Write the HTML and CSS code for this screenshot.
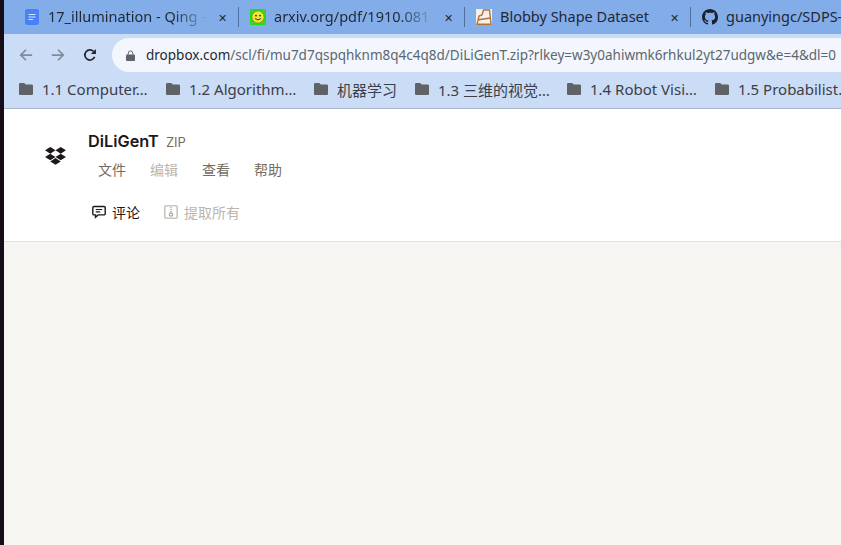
FILE: index.html
```html
<!DOCTYPE html>
<html lang="en">
<head>
    <meta charset="UTF-8">
    <meta name="viewport" content="width=device-width, initial-scale=1.0">
    <title>DiLiGenT.zip - Dropbox</title>
    <link rel="stylesheet" href="styles.css">
</head>
<body>
    <div class="desktop-edge"></div>
    <div class="window">
        <div class="tab-bar">
            <div class="tab">
                <svg class="tab-icon" viewBox="0 0 14 16"><rect width="14" height="16" rx="2.5" fill="#4a80f5"/><path d="M3.5 5.5h7M3.5 8h7M3.5 10.5h4.5" stroke="#d5e2fb" stroke-width="1.2"/></svg>
                <span class="tab-title">17_illumination - Qing -</span>
                <span class="tab-close">✕</span>
            </div>
            <div class="tab">
                <svg class="tab-icon" viewBox="0 0 16 16"><rect width="16" height="16" fill="#1fe010"/><circle cx="8" cy="8" r="6" fill="#f3e23a" stroke="#8a8a20" stroke-width=".6"/><circle cx="6" cy="6.6" r=".9" fill="#222"/><circle cx="10" cy="6.6" r=".9" fill="#222"/><path d="M5 9.500q3 2.800 6 0" stroke="#222" fill="none" stroke-width=".9"/><path d="M.5.5l2.500 2.500M15.500.5L13 3M.5 15.500L3 13M15.500 15.500L13 13" stroke="#998" stroke-width="1.300"/></svg>
                <span class="tab-title">arxiv.org/pdf/1910.081</span>
                <span class="tab-close">✕</span>
            </div>
            <div class="tab">
                <svg class="tab-icon" viewBox="0 0 16 16"><rect width="16" height="16" fill="#f6f1e8"/><path d="M1 15.300L3 7l3-1 1.500-5h6L15 15.300zM2.500 10.800L14.500 9" fill="none" stroke="#b5703a" stroke-width="1.400"/></svg>
                <span class="tab-title">Blobby Shape Dataset</span>
                <span class="tab-close">✕</span>
            </div>
            <div class="tab">
                <svg class="tab-icon" viewBox="0 0 16 16"><path fill="#1c222b" d="M8 0C3.580 0 0 3.580 0 8c0 3.540 2.290 6.530 5.470 7.590.4.070.55-.17.55-.38 0-.19-.01-.82-.01-1.490-2.010.37-2.530-.49-2.690-.94-.09-.23-.48-.94-.82-1.130-.28-.15-.68-.52-.01-.53.63-.01 1.080.58 1.230.82.720 1.210 1.870.87 2.330.66.070-.52.280-.87.510-1.070-1.780-.2-3.640-.89-3.640-3.950 0-.87.310-1.590.820-2.150-.08-.2-.36-1.020.08-2.120 0 0 .67-.21 2.200.82.640-.18 1.320-.27 2-.27s1.360.09 2 .27c1.530-1.040 2.200-.82 2.200-.82.44 1.100.16 1.920.08 2.120.51.56.82 1.270.82 2.150 0 3.070-1.870 3.750-3.650 3.950.29.25.54.73.54 1.480 0 1.070-.01 1.930-.01 2.200 0 .21.150.46.550.38A8.010 8.010 0 0 0 16 8c0-4.420-3.580-8-8-8z"/></svg>
                <span class="tab-title">guanyingc/SDPS-</span>
            </div>
        </div>

        <div class="address-row">
            <svg class="nav-icon" viewBox="0 0 16 16"><path d="M15 8H2M8 2L2 8l6 6" fill="none" stroke="#7f8a9a" stroke-width="2"/></svg>
            <svg class="nav-icon" viewBox="0 0 16 16"><path d="M1 8h13M8 2l6 6-6 6" fill="none" stroke="#7f8a9a" stroke-width="2"/></svg>
            <svg class="nav-icon" viewBox="0 0 16 16"><path d="M13.300 10.200A5.800 5.800 0 1 1 12.200 4" fill="none" stroke="#22262c" stroke-width="2"/><path d="M14.800 1v5.800H9z" fill="#22262c"/></svg>
            <div class="omnibox">
                <svg class="lock" viewBox="0 0 10 12"><path d="M2.500 5V3.400a2.500 2.500 0 0 1 5 0V5" fill="none" stroke="#5f6368" stroke-width="1.100"/><rect y="4.800" width="10" height="7.200" rx="1" fill="#5f6368"/></svg>
                <span class="url"><span class="url-host">dropbox.com</span>/scl/fi/mu7d7qspqhknm8q4c4q8d/DiLiGenT.zip?rlkey=w3y0ahiwmk6rhkul2yt27udgw&amp;e=4&amp;dl=0</span>
            </div>
        </div>

        <div class="bookmarks">
            <div class="bookmark bm-1"><svg class="folder" viewBox="0 0 14 12"><use href="#folder-shape"/></svg>1.1 Computer…</div>
            <div class="bookmark bm-2"><svg class="folder" viewBox="0 0 14 12"><use href="#folder-shape"/></svg>1.2 Algorithm…</div>
            <div class="bookmark bm-3"><svg class="folder" viewBox="0 0 14 12"><use href="#folder-shape"/></svg>机器学习</div>
            <div class="bookmark bm-4"><svg class="folder" viewBox="0 0 14 12"><use href="#folder-shape"/></svg>1.3 三维的视觉…</div>
            <div class="bookmark bm-5"><svg class="folder" viewBox="0 0 14 12"><use href="#folder-shape"/></svg>1.4 Robot Visi…</div>
            <div class="bookmark bm-6"><svg class="folder" viewBox="0 0 14 12"><use href="#folder-shape"/></svg>1.5 Probabilist.</div>
        </div>

        <header class="file-header">
            <svg class="dropbox-logo" viewBox="0 0 22 20"><path fill="#1e1919" d="M5.500 0L0 3.500 5.500 7 11 3.500zM16.500 0L11 3.500 16.500 7 22 3.500zM0 10.500L5.500 14 11 10.500 5.500 7zM16.500 7L11 10.500l5.500 3.500 5.500-3.500zM5.500 15.200L11 18.800l5.500-3.600L11 11.700z"/></svg>
            <div class="file-info">
                <div class="file-title"><span class="file-name">DiLiGenT</span><span class="file-type">ZIP</span></div>
                <nav class="file-menu">
                    <a href="#">文件</a>
                    <a href="#" class="disabled">编辑</a>
                    <a href="#">查看</a>
                    <a href="#">帮助</a>
                </nav>
                <div class="file-actions">
                    <a href="#" class="action">
                        <svg viewBox="0 0 14 13"><path d="M2 1h10a1.200 1.200 0 0 1 1.200 1.200v6a1.200 1.200 0 0 1-1.200 1.200H6.200l-2.700 2.400V9.400H2A1.200 1.200 0 0 1 .8 8.200v-6A1.200 1.200 0 0 1 2 1z" fill="none" stroke="#1e1919" stroke-width="1.400"/><path d="M3.800 4h6.400M3.800 6.300h4.400" stroke="#1e1919" stroke-width="1.200"/></svg>
                        评论
                    </a>
                    <a href="#" class="action disabled">
                        <svg viewBox="0 0 14 14"><rect x=".8" y=".8" width="12.400" height="12.400" rx="1" fill="none" stroke="#c9c5bf" stroke-width="1.600"/><path d="M7 2v5" stroke="#a8a39c" stroke-width="1.300" stroke-dasharray="1.200 .8"/><circle cx="7" cy="9.500" r="1.600" fill="none" stroke="#a8a39c" stroke-width="1.200"/></svg>
                        提取所有
                    </a>
                </div>
            </div>
        </header>

        <main class="file-body"></main>
    </div>

    <svg class="defs" width="0" height="0"><defs><path id="folder-shape" fill="#5f6368" d="M1.300 0h4l1.400 1.500h6c.7 0 1.300.6 1.300 1.300v7.900c0 .7-.6 1.300-1.300 1.300H1.300C.6 12 0 11.400 0 10.700V1.300C0 .6.600 0 1.300 0z"/></defs></svg>
</body>
</html>
```

FILE: styles.css
```css
* {
    margin: 0;
    padding: 0;
    box-sizing: border-box;
}

html, body {
    height: 100%;
    overflow: hidden;
}

body {
    display: flex;
    font-family: 'Noto Sans', 'Noto Sans CJK SC', sans-serif;
    background-color: #f7f5f2;
}

.desktop-edge {
    width: 4px;
    flex-shrink: 0;
    background-color: #170d17;
}

.window {
    flex: 1;
    min-width: 0;
    display: flex;
    flex-direction: column;
}

.defs {
    position: absolute;
}

/* browser chrome */
.tab-bar {
    height: 34px;
    flex-shrink: 0;
    display: flex;
    align-items: center;
    padding-left: 9px;
    background-color: #83ade9;
    overflow: hidden;
}

.tab {
    width: 226px;
    flex-shrink: 0;
    height: 20px;
    display: flex;
    align-items: center;
    padding: 0 11px;
    border-right: 1px solid #4f6f9f;
    color: #1f2833;
    font-size: 14.5px;
}

.tab:last-child {
    border-right: none;
    padding-right: 0;
}

.tab-icon {
    width: 16px;
    height: 16px;
    flex-shrink: 0;
    margin-right: 8px;
}

.tab-title {
    flex: 1;
    min-width: 0;
    margin-bottom: 3px;
    white-space: nowrap;
    overflow: hidden;
    -webkit-mask-image: linear-gradient(90deg, #000 78%, transparent 100%);
    mask-image: linear-gradient(90deg, #000 78%, transparent 100%);
}

.tab:nth-child(3) .tab-title,
.tab:last-child .tab-title {
    -webkit-mask-image: none;
    mask-image: none;
}

.tab-close {
    margin-left: 10px;
    font-size: 11px;
    color: #1f2833;
}

.address-row {
    height: 38px;
    flex-shrink: 0;
    display: flex;
    align-items: center;
    padding: 4px 0 0 15px;
    gap: 18px;
    background-color: #cbdcf6;
}

.nav-icon {
    width: 14px;
    height: 14px;
    flex-shrink: 0;
}

.omnibox {
    flex: 1;
    min-width: 0;
    height: 34px;
    margin-left: -3px;
    display: flex;
    align-items: center;
    padding-left: 14px;
    border-radius: 17px 0 0 17px;
    background-color: #f3f7fd;
    font-size: 13.5px;
    color: #5c6670;
    white-space: nowrap;
    overflow: hidden;
}

.lock {
    width: 9px;
    height: 11px;
    flex-shrink: 0;
    margin-right: 11px;
}

.url-host {
    color: #1f2833;
}

.bookmarks {
    height: 37px;
    flex-shrink: 0;
    display: flex;
    align-items: center;
    padding-bottom: 2px;
    background-color: #cbdcf6;
    border-bottom: 1px solid #a9b6cb;
    overflow: hidden;
}

.bookmark {
    flex-shrink: 0;
    display: flex;
    align-items: center;
    gap: 9px;
    padding-left: 15px;
    font-size: 15px;
    color: #3a4048;
    white-space: nowrap;
}

.bm-1 { width: 147px; }
.bm-2 { width: 148px; }
.bm-3 { width: 101px; }
.bm-4 { width: 152px; }
.bm-5 { width: 148px; }

.folder {
    width: 14px;
    height: 12px;
    flex-shrink: 0;
}

/* dropbox page */
.file-header {
    height: 133px;
    flex-shrink: 0;
    display: flex;
    background-color: #fff;
    border-bottom: 1px solid #e4e1db;
}

.dropbox-logo {
    width: 21px;
    height: 19px;
    margin: 38px 0 0 41px;
    flex-shrink: 0;
}

.file-info {
    margin-left: 22px;
    padding-top: 22px;
}

.file-title {
    display: flex;
    align-items: baseline;
    gap: 7px;
}

.file-name {
    font-family: 'Inter', sans-serif;
    font-size: 16.3px;
    font-weight: 600;
    color: #1e1919;
}

.file-type {
    font-family: 'Inter', sans-serif;
    font-size: 13px;
    color: #736c64;
}

.file-menu {
    display: flex;
    gap: 24px;
    margin: 8px 0 0 10px;
    font-size: 14px;
}

.file-menu a {
    color: #736c64;
    text-decoration: none;
}

.file-menu a.disabled {
    color: #bbb5ae;
}

.file-actions {
    display: flex;
    gap: 24px;
    margin: 23px 0 0 4px;
}

.action {
    display: flex;
    align-items: center;
    gap: 6px;
    font-size: 14px;
    color: #1e1919;
    text-decoration: none;
}

.action svg {
    width: 14px;
    height: 14px;
    flex-shrink: 0;
}

.action.disabled {
    color: #bbb5ae;
}

.file-body {
    flex: 1;
    background-color: #f7f5f2;
}
```
